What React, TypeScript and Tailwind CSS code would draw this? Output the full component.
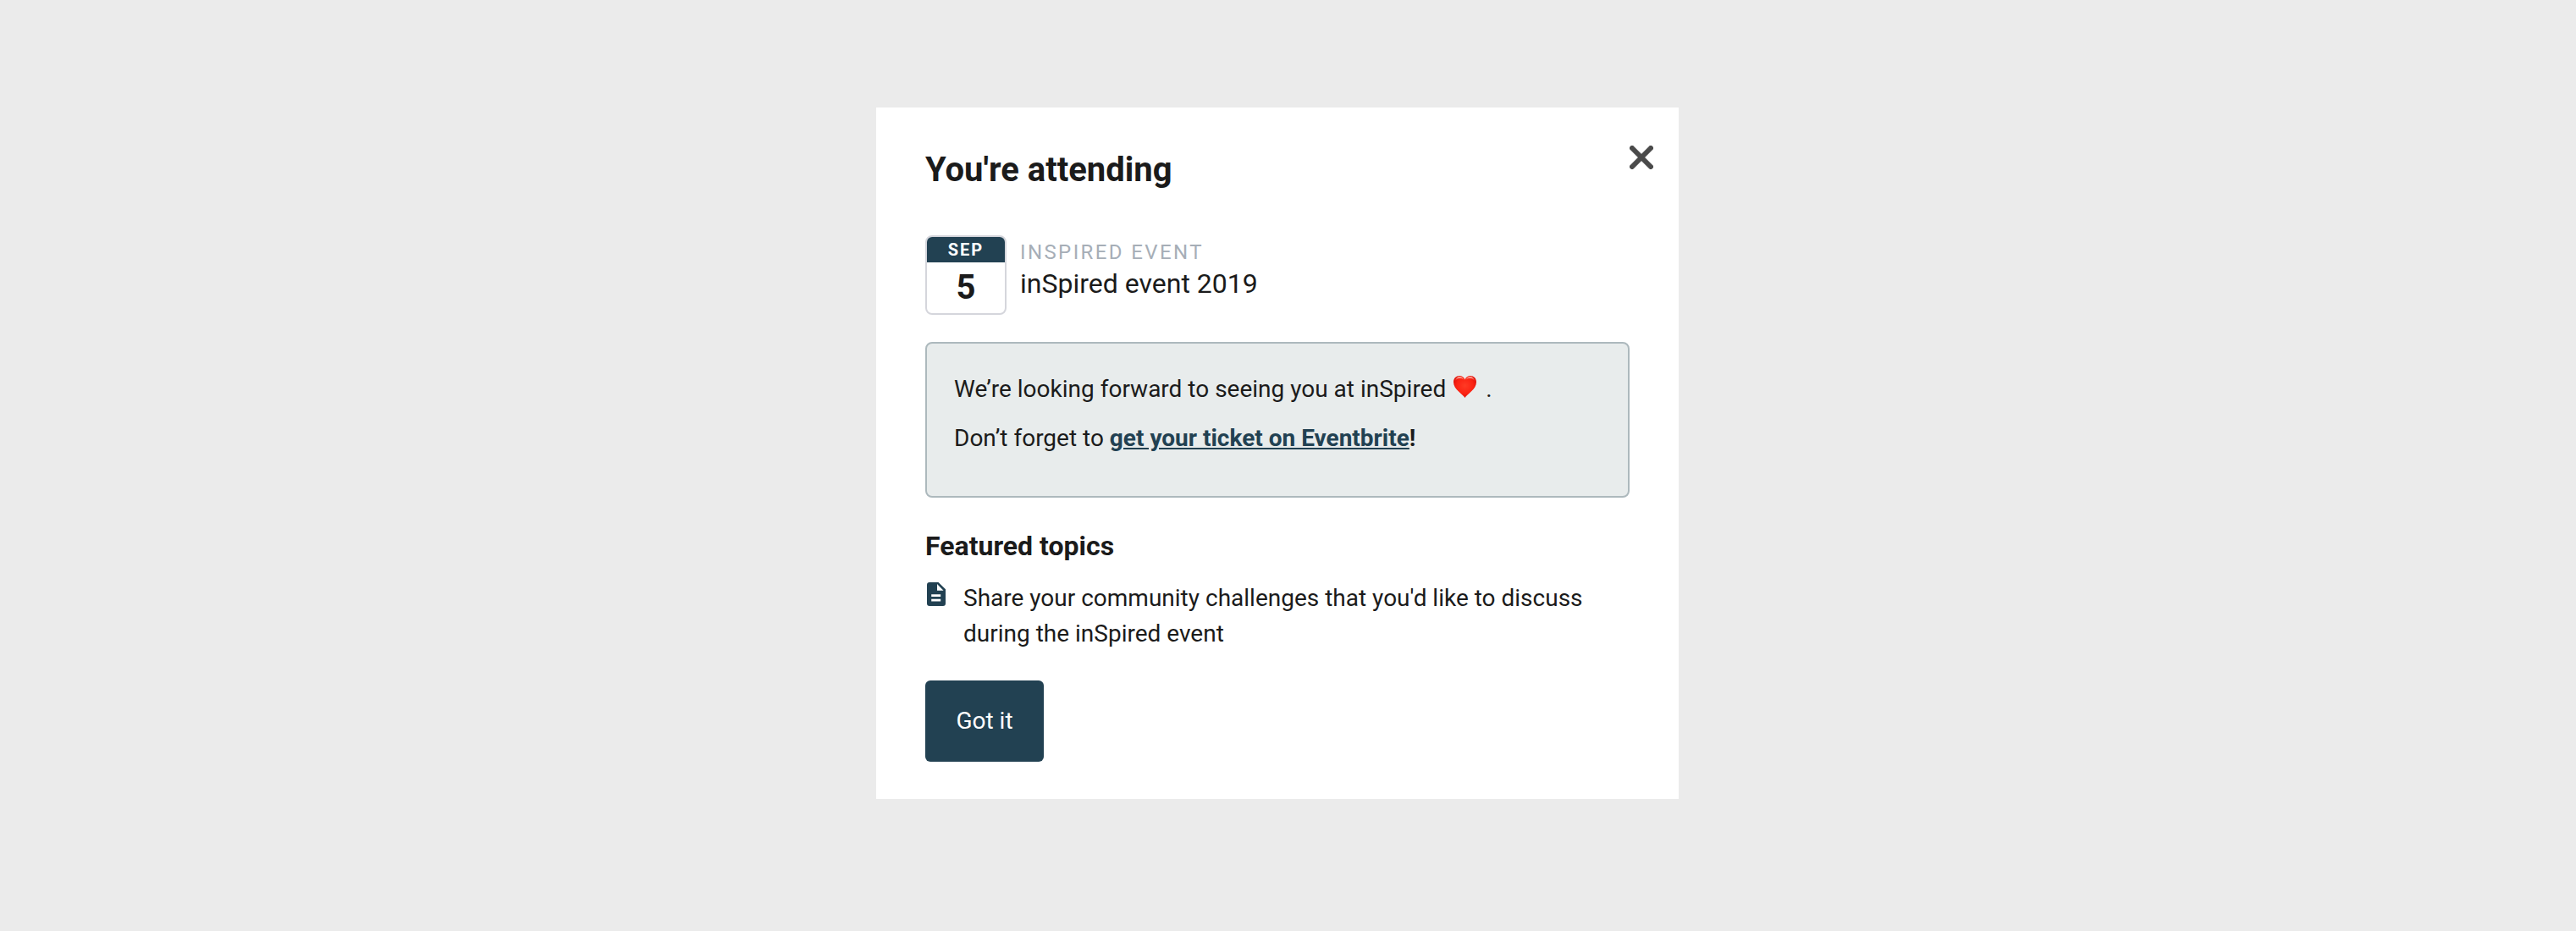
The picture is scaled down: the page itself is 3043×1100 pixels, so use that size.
import React from "react";

function CloseIcon() {
  return (
    <svg viewBox="0 0 28 28" className="size-7" aria-hidden="true">
      <path d="M3 3 L25 25 M25 3 L3 25" fill="none" stroke="#4a4a4a" strokeWidth="6" strokeLinecap="round" />
    </svg>
  );
}

function DocumentIcon() {
  return (
    <svg viewBox="0 0 22 28" className="h-7 w-[22px]" aria-hidden="true">
      <path
        fill="#224152"
        fillRule="evenodd"
        d="M3 0 H13.5 L22 8.2 V25 A3 3 0 0 1 19 28 H3 A3 3 0 0 1 0 25 V3 A3 3 0 0 1 3 0 Z M12 2 V9.7 H19.5 Z M5.2 14.2 V17 H16.2 V14.2 Z M5.2 19.8 V22.6 H16.2 V19.8 Z"
      />
    </svg>
  );
}

function Heart() {
  return (
    <svg viewBox="0 0 27 26" className="mr-1 ml-0.5 inline-block h-[26px] w-[27px] align-[-1px]" role="img" aria-label="heart">
      <defs>
        <radialGradient id="heart-fill" cx="0.5" cy="0.45" r="0.6">
          <stop offset="0" stopColor="#ff3a24" />
          <stop offset="0.6" stopColor="#fb2313" />
          <stop offset="1" stopColor="#d90f08" />
        </radialGradient>
        <linearGradient id="heart-shine" x1="0" y1="0" x2="0" y2="1">
          <stop offset="0" stopColor="#ffc4b8" />
          <stop offset="1" stopColor="#ff5a45" stopOpacity="0" />
        </linearGradient>
      </defs>
      <path
        fill="url(#heart-fill)"
        d="M13.5 26 C11 21.5 0 16 0 7.4 C0 3 3.2 0 7 0 C10 0 12.4 1.6 13.5 4.4 C14.6 1.6 17 0 20 0 C23.8 0 27 3 27 7.4 C27 16 16 21.5 13.5 26 Z"
      />
      <path
        fill="url(#heart-shine)"
        d="M2 6.5 C2.3 3 4.6 1.1 7.2 1.1 C9.8 1.1 11.6 2.6 12.4 5 C11 3.4 9.3 3 7.3 3.2 C4.8 3.4 3 4.6 2 6.5 Z M14.6 5 C15.4 2.6 17.2 1.1 19.8 1.1 C22.4 1.1 24.7 3 25 6.5 C24 4.6 22.2 3.4 19.7 3.2 C17.7 3 16 3.4 14.6 5 Z"
      />
    </svg>
  );
}

export default function App() {
  return (
    <div className="flex min-h-screen items-start justify-center bg-[#ebebeb] pt-[127px] pr-[25px] pb-10 font-[Roboto,sans-serif] text-[28px] leading-[42px] text-[#1b1b1b]">
      <main role="dialog" aria-labelledby="dialog-title" className="w-full max-w-[948px] bg-white pb-11">
        <header className="flex items-start justify-between pt-[45px] pr-[30px] pl-[58px]">
          <h1 id="dialog-title" className="pt-[5px] text-[40px] leading-[48px] font-bold">
            You're attending
          </h1>
          <button type="button" aria-label="Close">
            <CloseIcon />
          </button>
        </header>

        <div className="px-[58px] pt-[53px]">
          <section className="flex gap-4">
            <time
              dateTime="2019-09-05"
              className="flex h-[94px] w-24 flex-col overflow-hidden rounded-lg border-2 border-[#d5d6dc] text-center font-bold"
            >
              <span className="h-[30px] bg-[#224152] text-[20px] leading-[30px] tracking-widest text-white">SEP</span>
              <span className="text-[40px] leading-[60px]">5</span>
            </time>
            <div className="pt-1">
              <p className="text-[24px] leading-[32px] tracking-widest text-[#a6aeb7]">INSPIRED EVENT</p>
              <h2 className="text-[32px] leading-[42px]">inSpired event 2019</h2>
            </div>
          </section>

          <section className="mt-8 flex flex-col gap-4 rounded-lg border-2 border-[#adb9bd] bg-[#e8ecec] px-8 pt-[33px] pb-[47px]">
            <p>
              We’re looking forward to seeing you at inSpired <Heart /> .
            </p>
            <p>
              Don’t forget to{" "}
              <strong className="font-bold">
                <a href="#ticket" className="text-[#224152] underline">
                  get your ticket on Eventbrite
                </a>
                !
              </strong>
            </p>
          </section>

          <section className="mt-[37px]">
            <h2 className="text-[32px] leading-[40px] font-bold">Featured topics</h2>
            <ul className="mt-[21px]">
              <li className="flex gap-[21px] pl-0.5">
                <span className="shrink-0 pt-0.5">
                  <DocumentIcon />
                </span>
                <span>Share your community challenges that you'd like to discuss during the inSpired event</span>
              </li>
            </ul>
          </section>

          <button type="button" className="mt-[34px] h-24 min-w-[140px] rounded-md bg-[#224152] px-9 text-white">
            Got it
          </button>
        </div>
      </main>
    </div>
  );
}
